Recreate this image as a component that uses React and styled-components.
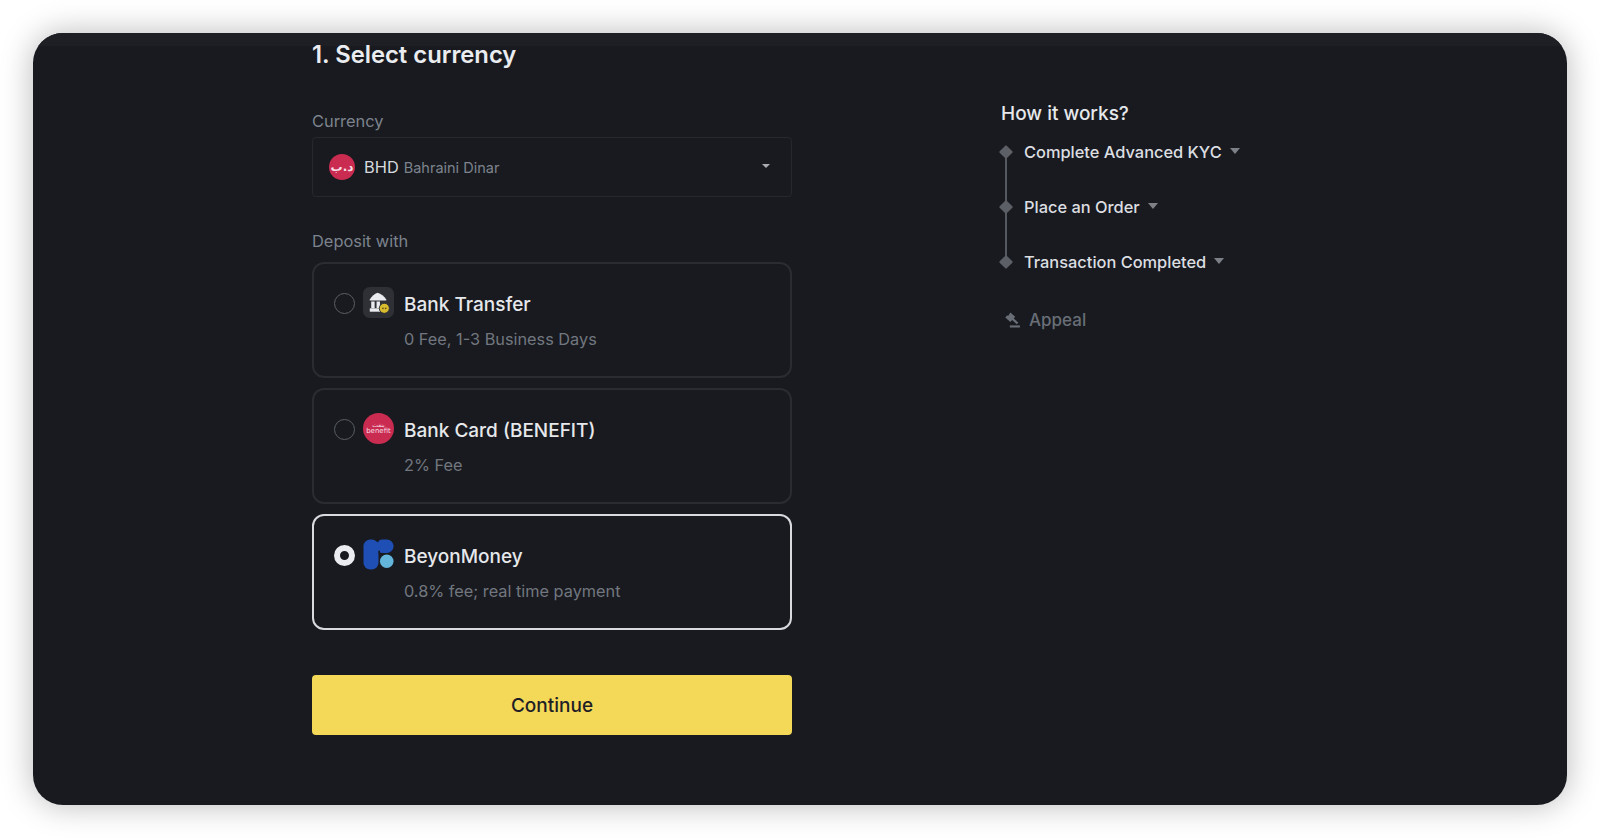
import React from "react";
import styled, { createGlobalStyle } from "styled-components";

const GlobalStyle = createGlobalStyle`
  html, body {
    margin: 0;
    height: 100%;
    background: #ffffff;
  }
  * {
    box-sizing: border-box;
  }
`;

const Page = styled.div`
  width: 1600px;
  height: 838px;
  padding: 33px 33px 33px 33px;
  font-family: Inter, "Liberation Sans", sans-serif;
  background: #ffffff;
`;

const Panel = styled.div`
  height: 772px;
  border-radius: 30px;
  background: #181a1f;
  box-shadow: 0 0 32px rgba(0, 0, 0, 0.28);
  overflow: hidden;
  display: flex;
  flex-direction: column;
`;

const TopStrip = styled.div`
  height: 13px;
  flex: none;
  background: #1d1f24;
`;

const Columns = styled.div`
  display: flex;
  gap: 209px;
  padding-left: 279px;
`;

const LeftColumn = styled.div`
  width: 480px;
  display: flex;
  flex-direction: column;
`;

const Heading = styled.h2`
  margin: -1px 0 46px;
  height: 20px;
  line-height: 20px;
  font-size: 23.8px;
  font-weight: 600;
  color: #eaecef;
`;

const FieldLabel = styled.div`
  height: 20px;
  line-height: 20px;
  margin-bottom: ${(p) => p.$gap}px;
  font-size: 16.4px;
  color: #7d838d;
`;

const Select = styled.div`
  height: 60px;
  margin-bottom: 34px;
  padding: 0 21px 0 16px;
  border: 1px solid #26282e;
  border-radius: 4px;
  display: flex;
  align-items: center;
`;

const CoinCode = styled.span`
  margin-left: 9px;
  font-size: 16.4px;
  color: #d5d8dc;
`;

const CoinName = styled.span`
  margin-left: 5px;
  font-size: 14.5px;
  color: #7d838d;
`;

const Arrow = styled.span`
  width: 0;
  height: 0;
  border-left: ${(p) => p.$size}px solid transparent;
  border-right: ${(p) => p.$size}px solid transparent;
  border-top: ${(p) => p.$size * 1.2}px solid ${(p) => p.$color};
`;

const SelectArrow = styled(Arrow)`
  margin-left: auto;
  margin-top: -2px;
`;

const Methods = styled.div`
  display: flex;
  flex-direction: column;
  gap: 10px;
`;

const MethodCard = styled.div`
  height: 116px;
  padding: 20px 20px 0;
  border: ${(p) => (p.$selected ? "2px solid #d8dadd" : "2px solid #2a2c32")};
  border-radius: 12px;
  display: flex;
  align-items: flex-start;
`;

const Radio = styled.span`
  width: 21px;
  height: 21px;
  flex: none;
  margin-top: 9px;
  border-radius: 50%;
  border: ${(p) => (p.$on ? "6px solid #eaecef" : "1.5px solid #5a5e66")};
  background: ${(p) => (p.$on ? "#181a1f" : "transparent")};
`;

const MethodIcon = styled.span`
  width: 31px;
  height: 31px;
  flex: none;
  margin: 3px 10px 0 8px;
  display: flex;
  align-items: center;
  justify-content: center;
`;

const MethodBody = styled.div`
  display: flex;
  flex-direction: column;
`;

const MethodTitle = styled.div`
  height: 24px;
  margin-top: 9px;
  line-height: 24px;
  font-size: 19px;
  font-weight: 500;
  color: #e6e8eb;
`;

const MethodNote = styled.div`
  height: 20px;
  margin-top: 12px;
  line-height: 20px;
  font-size: 16.3px;
  color: #72777f;
`;

const ContinueButton = styled.button`
  height: 60px;
  margin-top: 45px;
  border: none;
  border-radius: 4px;
  background: #f4d959;
  color: #1e2026;
  font-family: inherit;
  font-size: 19px;
  font-weight: 500;
`;

const RightColumn = styled.div`
  width: 320px;
  padding-top: 56px;
  display: flex;
  flex-direction: column;
`;

const SideTitle = styled.div`
  height: 24px;
  line-height: 24px;
  font-size: 19px;
  font-weight: 500;
  color: #e6e8eb;
`;

const Steps = styled.div`
  position: relative;
  margin-top: 16px;
  display: flex;
  flex-direction: column;
  gap: 35px;

  &::before {
    content: "";
    position: absolute;
    left: 4px;
    top: 10px;
    height: 110px;
    width: 2px;
    background: #55585e;
  }
`;

const Step = styled.div`
  height: 20px;
  display: flex;
  align-items: center;
  font-size: 16.4px;
  font-weight: 500;
  color: #dcdee1;
`;

const Diamond = styled.span`
  position: relative;
  width: 10px;
  height: 10px;
  margin-right: 13px;
  flex: none;
  background: #5c5f65;
  transform: rotate(45deg);
  border-radius: 1px;
`;

const StepArrow = styled(Arrow)`
  margin-left: 8px;
  margin-top: -3px;
`;

const Appeal = styled.div`
  margin-top: 38px;
  height: 20px;
  padding-left: 3px;
  display: flex;
  align-items: center;
  gap: 8px;
  font-size: 17px;
  font-weight: 500;
  color: #696e76;
`;

const CurrencyLogo = styled.span`
  width: ${(p) => p.$size}px;
  height: ${(p) => p.$size}px;
  flex: none;
  border-radius: 50%;
  background: #c92c50;
  display: flex;
  flex-direction: column;
  align-items: center;
  justify-content: center;
  color: #f9dfe5;
  overflow: hidden;
`;

const LogoText = styled.span`
  font-family: "DejaVu Sans", sans-serif;
  font-size: ${(p) => p.$px}px;
  font-weight: ${(p) => p.$weight || 400};
  line-height: 1;
  white-space: nowrap;
`;

const BankGlyph = () => (
  <svg width="31" height="31" viewBox="0 0 32 32">
    <rect width="32" height="32" rx="7" fill="#2e3036" />
    <path d="M15 6 C18.5 7 22 9.5 24 13 V14 H7 V13 C9 9.5 12 7 15 6 Z" fill="#eaecef" />
    <path d="M8.5 15h3.5v7h-3.5zM14 15h3.5v7h-3.5z" fill="#eaecef" />
    <rect x="7" y="22" width="12" height="3.5" fill="#eaecef" />
    <circle cx="22" cy="22" r="5.2" fill="#d9bb2e" stroke="#2e3036" />
    <circle cx="20.6" cy="22" r="0.9" fill="#5d5320" />
    <circle cx="23.4" cy="22" r="0.9" fill="#5d5320" />
  </svg>
);

const BeyonGlyph = () => (
  <svg width="31" height="31" viewBox="0 0 32 32">
    <rect x="0.5" y="0.5" width="15.5" height="31" rx="7" fill="#1f4fb4" />
    <rect x="13" y="0.5" width="18.5" height="14" rx="7" fill="#1f4fb4" />
    <path d="M13.5 0 L15.5 3.5 L17.5 0 Z" fill="#181a1f" />
    <rect x="16" y="12" width="1.5" height="3" fill="#181a1f" />
    <circle cx="24.5" cy="23" r="7" fill="#64b5dc" />
  </svg>
);

const GavelGlyph = () => (
  <svg width="17" height="17" viewBox="0 0 16 16" fill="#696e76">
    <path d="M6 0.5 L10.5 4.5 L9.2 6 L13.5 10 L12 11.6 L7.6 7.6 L6 9.4 L1.2 5.2 L2.8 3.4 L4 3.6 Z" />
    <rect x="5.5" y="12.6" width="9.5" height="2" />
  </svg>
);

const methods = [
  { title: "Bank Transfer", note: "0 Fee, 1-3 Business Days", icon: <BankGlyph /> },
  {
    title: "Bank Card (BENEFIT)",
    note: "2% Fee",
    icon: (
      <CurrencyLogo $size={31}>
        <LogoText $px={6}>بنفت</LogoText>
        <LogoText $px={7}>benefit</LogoText>
      </CurrencyLogo>
    ),
  },
  { title: "BeyonMoney", note: "0.8% fee; real time payment", icon: <BeyonGlyph />, selected: true },
];

const steps = ["Complete Advanced KYC", "Place an Order", "Transaction Completed"];

export default function App() {
  return (
    <Page>
      <GlobalStyle />
      <Panel>
        <TopStrip />
        <Columns>
          <LeftColumn>
            <Heading>1. Select currency</Heading>
            <FieldLabel $gap={6}>Currency</FieldLabel>
            <Select>
              <CurrencyLogo $size={26}>
                <LogoText $px={12} $weight={700}>د.ب</LogoText>
              </CurrencyLogo>
              <CoinCode>BHD</CoinCode>
              <CoinName>Bahraini Dinar</CoinName>
              <SelectArrow $size={4} $color="#a9adb3" />
            </Select>
            <FieldLabel $gap={11}>Deposit with</FieldLabel>
            <Methods>
              {methods.map((m) => (
                <MethodCard key={m.title} $selected={m.selected}>
                  <Radio $on={m.selected} />
                  <MethodIcon>{m.icon}</MethodIcon>
                  <MethodBody>
                    <MethodTitle>{m.title}</MethodTitle>
                    <MethodNote>{m.note}</MethodNote>
                  </MethodBody>
                </MethodCard>
              ))}
            </Methods>
            <ContinueButton>Continue</ContinueButton>
          </LeftColumn>
          <RightColumn>
            <SideTitle>How it works?</SideTitle>
            <Steps>
              {steps.map((s) => (
                <Step key={s}>
                  <Diamond />
                  {s}
                  <StepArrow $size={5} $color="#7d8087" />
                </Step>
              ))}
            </Steps>
            <Appeal>
              <GavelGlyph />
              Appeal
            </Appeal>
          </RightColumn>
        </Columns>
      </Panel>
    </Page>
  );
}
